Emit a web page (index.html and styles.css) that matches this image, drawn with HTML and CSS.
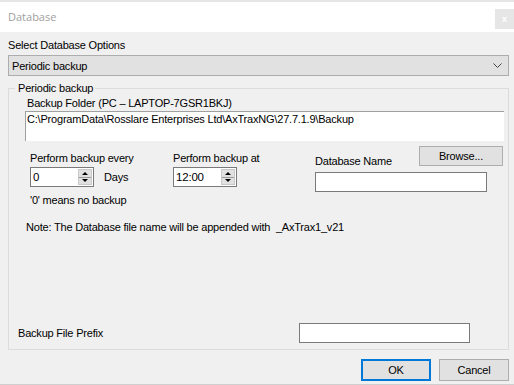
FILE: index.html
```html
<!DOCTYPE html>
<html lang="en">
<head>
    <meta charset="UTF-8">
    <title>Database</title>
    <link rel="stylesheet" href="styles.css">
</head>
<body>
    <div class="titlebar">
        <span class="title">Database</span>
        <span class="close">x</span>
    </div>
    <div class="content">
        <div class="caption">Select Database Options</div>
        <div class="combo">
            <span>Periodic backup</span>
            <svg class="chev" width="9" height="5" viewBox="0 0 9 5"><path d="M0.5 0.5 L4.5 4.5 L8.5 0.5" fill="none" stroke="#444" stroke-width="1"/></svg>
        </div>
        <div class="group">
            <span class="legend">Periodic backup</span>
            <div class="folder-label">Backup Folder (PC &ndash; LAPTOP-7GSR1BKJ)</div>
            <div class="folder-box">C:\ProgramData\Rosslare Enterprises Ltd\AxTraxNG\27.7.1.9\Backup</div>
            <div class="options">
                <div class="col col-every">
                    <div class="lbl">Perform backup every</div>
                    <div class="spin-row">
                        <div class="spin spin-days">
                            <span class="val">0</span>
                            <span class="arrows"><span class="up"></span><span class="down"></span></span>
                        </div>
                        <span class="days">Days</span>
                    </div>
                    <div class="hint">'0' means no backup</div>
                </div>
                <div class="col col-at">
                    <div class="lbl">Perform backup at</div>
                    <div class="spin spin-time">
                        <span class="val">12:00</span>
                        <span class="arrows"><span class="up"></span><span class="down"></span></span>
                    </div>
                </div>
                <div class="col col-name">
                    <div class="btn browse">Browse...</div>
                    <div class="name-field">
                        <div class="lbl">Database Name</div>
                        <div class="textbox name-box"></div>
                    </div>
                </div>
            </div>
            <div class="note">Note: The Database file name will be appended with &nbsp;_AxTrax1_v21</div>
            <div class="prefix-row">
                <span>Backup File Prefix</span>
                <div class="textbox prefix-box"></div>
            </div>
        </div>
        <div class="buttons">
            <div class="btn ok">OK</div>
            <div class="btn">Cancel</div>
        </div>
    </div>
    <div class="bottom-line"></div>
</body>
</html>
```

FILE: styles.css
```css
body { margin: 0; background: #f0f0f0; font-family: 'Liberation Sans', Arial, sans-serif; font-size: 11px; letter-spacing: -0.2px; color: #000; width: 514px; height: 385px; overflow: hidden; }
.titlebar { height: 30px; background: #fff; border-top: 2px solid #e6e6e6; display: flex; align-items: flex-start; justify-content: space-between; }
.title { margin: 7px 0 0 8px; font-family: 'Open Sans', 'Noto Sans', sans-serif; font-size: 11px; letter-spacing: 0; color: #a0a0a0; }
.close { width: 19px; height: 20px; background: #e6e6e6; color: #fff; font-size: 9px; font-weight: bold; display: flex; align-items: center; justify-content: center; margin-top: 7px; }
.content { padding: 0 5px 0 8px; }
.caption { margin-top: 7px; line-height: 13px; }
.combo { margin-top: 3px; height: 19px; background: #e1e1e1; border: 1px solid #adadad; display: flex; align-items: center; justify-content: space-between; padding: 0 6px 0 3px; }
.chev { display: block; }
.group { position: relative; margin-top: 12px; border: 1px solid #dcdcdc; padding: 8px 4px 6px 16px; }
.legend { position: absolute; left: 6px; top: -7px; padding: 0 2px 0 3px; background: #f0f0f0; line-height: 13px; }
.folder-label { margin-left: 2px; line-height: 13px; }
.folder-box { margin-top: 1px; height: 28px; background: #fff; border-top: 1px solid #a0a0a0; border-left: 1px solid #a0a0a0; padding: 1px 0 0 1px; line-height: 13px; }
.options { display: flex; margin-top: 5px; padding-left: 5px; }
.lbl { line-height: 13px; }
.col-every { width: 143px; padding-top: 6px; }
.col-at { width: 142px; padding-top: 6px; }
.col-name { flex: 1; display: grid; }
.col-name > * { grid-area: 1 / 1; }
.spin-row { display: flex; align-items: center; margin-top: 2px; }
.spin { height: 18px; background: #fff; border: 1px solid #7a7a7a; display: flex; align-items: center; justify-content: space-between; padding-left: 2px; margin-top: 2px; }
.spin-row .spin { margin-top: 0; }
.spin-days { width: 60px; }
.spin-time { width: 60px; }
.val { font-size: 11.5px; }
.arrows { width: 14px; height: 16px; margin-right: 1px; background: #e1e1e1; border: 1px solid #c8c8c8; box-sizing: border-box; display: flex; flex-direction: column; }
.arrows span { flex: 1; display: flex; align-items: center; justify-content: center; }
.arrows .up { border-bottom: 1px solid #9a9a9a; }
.arrows .up::after { content: ''; border: 3px solid transparent; border-bottom: 3px solid #000; border-top: 0; }
.arrows .down::after { content: ''; border: 3px solid transparent; border-top: 3px solid #000; border-bottom: 0; }
.days { margin-left: 10px; }
.hint { margin-top: 7px; line-height: 13px; }
.btn { background: #e1e1e1; border: 1px solid #adadad; display: flex; align-items: center; justify-content: center; box-sizing: border-box; }
.browse { justify-self: end; align-self: start; width: 84px; height: 20px; margin-right: 1px; }
.name-field { padding-top: 9px; }
.textbox { background: #fff; border: 1px solid #7a7a7a; box-sizing: border-box; height: 20px; width: 172px; }
.name-box { margin-top: 4px; }
.note { margin-top: 14px; margin-left: 1px; line-height: 13px; }
.prefix-row { display: flex; align-items: center; justify-content: space-between; width: 452px; margin: 89px 0 0 -7px; }
.prefix-box { width: 171px; }
.buttons { display: flex; justify-content: flex-end; gap: 8px; margin-top: 9px; }
.buttons .btn { width: 70px; height: 22px; }
.buttons .ok { border: 2px solid #0078d7; }
.bottom-line { height: 1px; background: #cfcfcf; margin-top: 3px; }
```
